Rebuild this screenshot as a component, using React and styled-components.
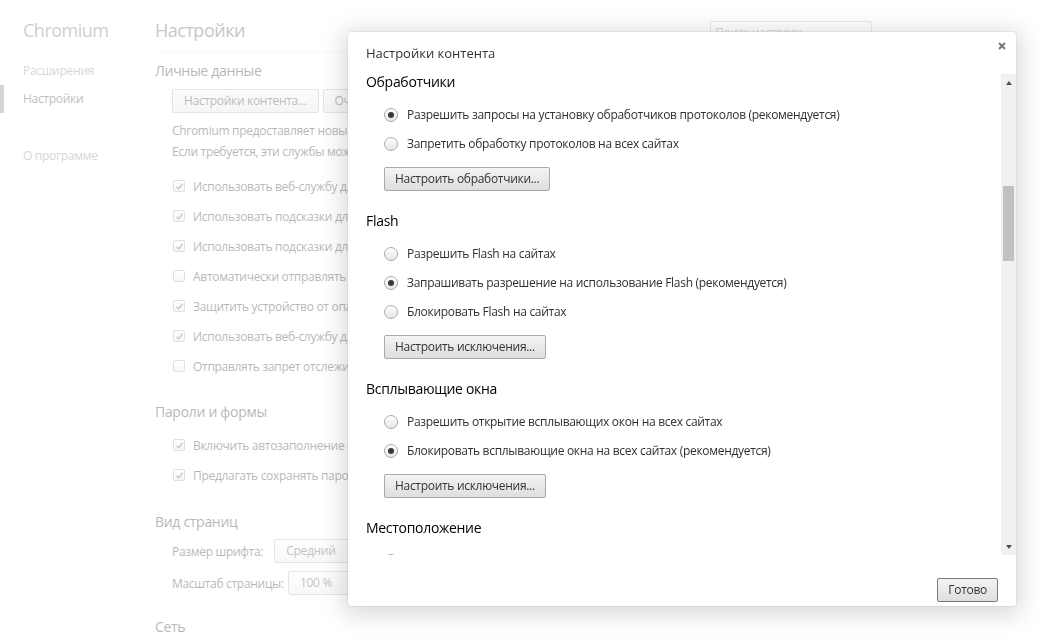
import React from 'react'
import styled, { createGlobalStyle } from 'styled-components'

const GlobalStyle = createGlobalStyle`
  html, body {
    margin: 0;
    padding: 0;
    background: #fff;
    font-family: "Open Sans", "Liberation Sans", sans-serif;
    letter-spacing: -0.3px;
    overflow: hidden;
  }
`

/* ---------- settings page underneath ---------- */

const Page = styled.div`
  display: flex;
  width: 1048px;
  height: 637px;
  color: #303942;
  font-size: 12px;
`

const Sidebar = styled.nav`
  width: 155px;
  flex-shrink: 0;
`

const Brand = styled.div`
  padding: 17px 0 0 23px;
  height: 35px;
  line-height: 26px;
  font-size: 18px;
  letter-spacing: -0.5px;
  color: #777;
`

const NavItem = styled.div`
  position: relative;
  padding-left: 23px;
  height: 28px;
  line-height: 28px;
  font-size: 12px;
  color: ${p => (p.active ? '#464e5a' : '#8d8d8d')};
  margin-top: ${p => p.gap || 0}px;
  &::before {
    content: '';
    display: ${p => (p.active ? 'block' : 'none')};
    position: absolute;
    left: 0;
    top: 0;
    width: 4px;
    height: 28px;
    background: #8a8a8a;
  }
`

const Main = styled.main`
  width: 717px;
  flex-shrink: 0;
`

const Header = styled.header`
  display: flex;
  align-items: flex-start;
  height: 52px;
  border-bottom: 1px solid #ececec;
  box-sizing: border-box;
`

const PageTitle = styled.h1`
  margin: 17px 0 0;
  line-height: 26px;
  font-size: 18px;
  letter-spacing: -0.5px;
  font-weight: normal;
  color: #5c6166;
`

const Search = styled.div`
  margin: 21px 0 0 auto;
  width: 152px;
  height: 24px;
  border: 1px solid #c4c4c4;
  border-radius: 2px;
  padding: 0 4px;
  line-height: 22px;
  font-size: 12px;
  color: #999;
`

const Section = styled.section`
  margin-top: ${p => p.top}px;
`

const SectionTitle = styled.h3`
  margin: 0;
  height: 20px;
  line-height: 20px;
  font-size: 14px;
  font-weight: normal;
  color: #303942;
`

const Indent = styled.div`
  padding-left: 17px;
  margin-top: ${p => p.top || 0}px;
`

const ButtonRow = styled.div`
  display: flex;
  gap: 4px;
`

const PageButton = styled.div`
  height: 24px;
  box-sizing: border-box;
  padding: 0 11px;
  border: 1px solid #b4b4b4;
  border-radius: 2px;
  background: linear-gradient(#f6f6f6, #e4e4e4);
  line-height: 22px;
  font-size: 12px;
  color: #444;
  white-space: nowrap;
`

const Para = styled.div`
  line-height: 21px;
  font-size: 12px;
  color: #303942;
  white-space: nowrap;
`

const CheckRow = styled.div`
  display: flex;
  align-items: center;
  height: 30px;
  font-size: 12px;
  white-space: nowrap;
`

const Box = styled.span`
  width: 10px;
  height: 10px;
  margin: 0 8px 0 1px;
  border: 1px solid #a7a7a7;
  border-radius: 2px;
  background: linear-gradient(#fdfdfd, #e8e8e8);
  display: flex;
  align-items: center;
  justify-content: center;
`

const FieldRow = styled.div`
  display: flex;
  align-items: center;
  height: 32px;
  font-size: 12px;
  white-space: nowrap;
`

const FieldLabel = styled.span`
  color: #303942;
  margin-right: ${p => p.gap}px;
`

const Select = styled.div`
  width: 110px;
  height: 24px;
  box-sizing: border-box;
  padding-left: 11px;
  border: 1px solid #b4b4b4;
  border-radius: 2px;
  background: linear-gradient(#fafafa, #ececec);
  line-height: 22px;
  color: #555;
`

const Fade = styled.div`
  position: fixed;
  inset: 0;
  background: rgba(255, 255, 255, 0.64);
`

/* ---------- content settings dialog ---------- */

const Dialog = styled.div`
  position: absolute;
  left: 348px;
  top: 32px;
  width: 668px;
  height: 574px;
  display: flex;
  flex-direction: column;
  background: #fff;
  border-radius: 3px;
  box-shadow: 0 4px 23px 5px rgba(0, 0, 0, 0.15), 0 0 0 1px rgba(0, 0, 0, 0.05);
  overflow: hidden;
  color: #333;
`

const DialogHead = styled.div`
  display: flex;
  align-items: flex-start;
  height: 40px;
  padding-left: 18px;
`

const DialogTitle = styled.h1`
  margin: 12px 0 0;
  line-height: 18px;
  font-size: 13px;
  letter-spacing: 0;
  font-weight: normal;
  color: #333;
`

const Close = styled.div`
  margin: 10px 10px 0 auto;
  width: 8px;
  height: 8px;
  svg {
    display: block;
  }
`

const Body = styled.div`
  display: flex;
  height: 483px;
`

const Scroller = styled.div`
  flex: 1;
  overflow: hidden;
  padding-left: 18px;
`

const Group = styled.div`
  margin-bottom: 20px;
`

const GroupTitle = styled.h3`
  margin: 0 0 8px;
  height: 20px;
  line-height: 20px;
  font-size: 14px;
  font-weight: normal;
  color: #000;
`

const RadioRow = styled.div`
  display: flex;
  align-items: center;
  height: 29px;
  padding-left: 18px;
  font-size: 12px;
  color: #303030;
  white-space: nowrap;
`

const Radio = styled.span`
  width: 12px;
  height: 12px;
  margin-right: 9px;
  border: 1px solid #a9a9a9;
  border-radius: 50%;
  background: linear-gradient(#fefefe, #e6e6e6);
  box-shadow: inset 0 1px 1px #fff;
  display: flex;
  align-items: center;
  justify-content: center;
  &::after {
    content: '';
    display: ${p => (p.checked ? 'block' : 'none')};
    width: 6px;
    height: 6px;
    border-radius: 50%;
    background: #3a3a3a;
  }
`

const DlgButton = styled.div`
  display: inline-block;
  margin: 9px 0 0 18px;
  height: 24px;
  box-sizing: border-box;
  padding: 0 10px;
  border: 1px solid ${p => (p.primary ? '#7a7a7a' : '#aaa')};
  border-radius: 2px;
  background: linear-gradient(#f4f4f4, #dedede);
  line-height: 22px;
  font-size: 12px;
  color: #333;
  white-space: nowrap;
`

const Track = styled.div`
  width: 15px;
  flex-shrink: 0;
  display: flex;
  flex-direction: column;
  align-items: center;
  margin-top: 2px;
  background: #f1f1f1;
`

const Arrow = styled.div`
  width: 0;
  height: 0;
  margin-top: ${p => (p.down ? 'auto' : '7px')};
  margin-bottom: ${p => (p.down ? '6px' : 0)};
  border-left: 3.5px solid transparent;
  border-right: 3.5px solid transparent;
  border-${p => (p.down ? 'top' : 'bottom')}: 4px solid #505050;
`

const Thumb = styled.div`
  width: 11px;
  height: 75px;
  margin-top: 101px;
  background: #c1c1c1;
`

const Footer = styled.div`
  flex: 1;
  display: flex;
  justify-content: flex-end;
  align-items: flex-start;
  padding: 14px 18px 0 0;
`

const Check = () => (
  <svg width="9" height="9" viewBox="0 0 9 9">
    <path d="M1.5 4.8 L3.6 6.9 L7.6 1.8" fill="none" stroke="#6f6f6f" strokeWidth="1.6" />
  </svg>
)

const CloseIcon = () => (
  <svg width="8" height="8" viewBox="0 0 8 8">
    <path d="M1 1 L7 7 M7 1 L1 7" stroke="#777" strokeWidth="2" />
  </svg>
)

const privacy = [
  ['Использовать веб-службу для разрешения проблем, связанных с навигацией', true],
  ['Использовать подсказки для завершения поисковых запросов и URL', true],
  ['Использовать подсказки для быстрой загрузки страниц', true],
  ['Автоматически отправлять в Google статистику использования', false],
  ['Защитить устройство от опасных сайтов', true],
  ['Использовать веб-службу для проверки правописания', true],
  ['Отправлять запрет отслеживания с исходящим трафиком', false],
]

const passwords = [
  ['Включить автозаполнение форм одним кликом', true],
  ['Предлагать сохранять пароли для сайтов', true],
]

const groups = [
  {
    title: 'Обработчики',
    options: [
      ['Разрешить запросы на установку обработчиков протоколов (рекомендуется)', true],
      ['Запретить обработку протоколов на всех сайтах', false],
    ],
    button: 'Настроить обработчики...',
  },
  {
    title: 'Flash',
    options: [
      ['Разрешить Flash на сайтах', false],
      ['Запрашивать разрешение на использование Flash (рекомендуется)', true],
      ['Блокировать Flash на сайтах', false],
    ],
    button: 'Настроить исключения...',
  },
  {
    title: 'Всплывающие окна',
    options: [
      ['Разрешить открытие всплывающих окон на всех сайтах', false],
      ['Блокировать всплывающие окна на всех сайтах (рекомендуется)', true],
    ],
    button: 'Настроить исключения...',
  },
  {
    title: 'Местоположение',
    options: [
      ['Разрешить всем сайтам отслеживать мое местоположение', false],
      ['Спрашивать, когда сайт пытается отследить мое местоположение (рекомендуется)', true],
    ],
    button: 'Настроить исключения...',
  },
]

const CheckList = ({ items }) =>
  items.map(([label, on]) => (
    <CheckRow key={label}>
      <Box>{on && <Check />}</Box>
      {label}
    </CheckRow>
  ))

const App = () => {
  return (
    <>
      <GlobalStyle />
      <Page>
        <Sidebar>
          <Brand>Chromium</Brand>
          <NavItem gap={5}>Расширения</NavItem>
          <NavItem active>Настройки</NavItem>
          <NavItem gap={29}>О программе</NavItem>
        </Sidebar>

        <Main>
          <Header>
            <PageTitle>Настройки</PageTitle>
            <Search>Поиск настроек</Search>
          </Header>

          <Section top={9}>
            <SectionTitle>Личные данные</SectionTitle>
            <Indent top={8}>
              <ButtonRow>
                <PageButton>Настройки контента...</PageButton>
                <PageButton>Очистить историю...</PageButton>
              </ButtonRow>
              <div style={{ marginTop: 7 }}>
                <Para>Chromium предоставляет новые возможности, используя веб-службы.</Para>
                <Para>Если требуется, эти службы можно отключить.</Para>
              </div>
            </Indent>
            <Indent top={9}>
              <CheckList items={privacy} />
            </Indent>
          </Section>

          <Section top={21}>
            <SectionTitle>Пароли и формы</SectionTitle>
            <Indent top={8}>
              <CheckList items={passwords} />
            </Indent>
          </Section>

          <Section top={22}>
            <SectionTitle>Вид страниц</SectionTitle>
            <Indent top={3}>
              <FieldRow>
                <FieldLabel gap={11}>Размер шрифта:</FieldLabel>
                <Select>Средний</Select>
              </FieldRow>
              <FieldRow>
                <FieldLabel gap={4}>Масштаб страницы:</FieldLabel>
                <Select>100 %</Select>
              </FieldRow>
            </Indent>
          </Section>

          <Section top={18}>
            <SectionTitle>Сеть</SectionTitle>
          </Section>
        </Main>
      </Page>

      <Fade />

      <Dialog>
        <DialogHead>
          <DialogTitle>Настройки контента</DialogTitle>
          <Close>
            <CloseIcon />
          </Close>
        </DialogHead>

        <Body>
          <Scroller>
            {groups.map(g => (
              <Group key={g.title}>
                <GroupTitle>{g.title}</GroupTitle>
                {g.options.map(([label, on]) => (
                  <RadioRow key={label}>
                    <Radio checked={on} />
                    {label}
                  </RadioRow>
                ))}
                <DlgButton>{g.button}</DlgButton>
              </Group>
            ))}
          </Scroller>
          <Track>
            <Arrow />
            <Thumb />
            <Arrow down />
          </Track>
        </Body>

        <Footer>
          <DlgButton primary>Готово</DlgButton>
        </Footer>
      </Dialog>
    </>
  )
}

export default App
